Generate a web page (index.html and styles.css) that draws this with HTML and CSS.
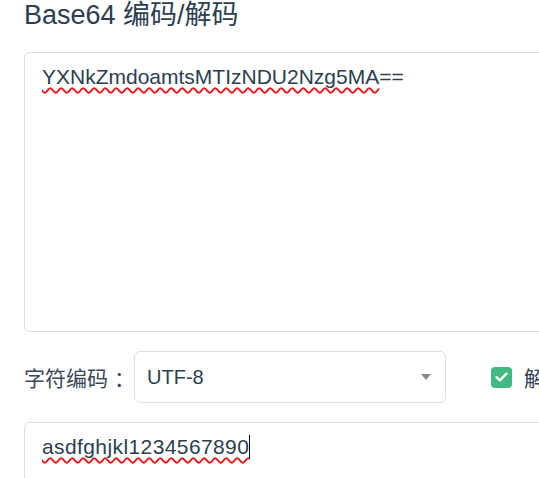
FILE: index.html
```html
<!DOCTYPE html>
<html lang="zh">
<head>
<meta charset="utf-8">
<link rel="stylesheet" href="styles.css">
</head>
<body>
<div class="page">
  <h1 class="title">Base64 编码/解码</h1>
  <div class="area area-top">
    <span class="spell">YXNkZmdoamtsMTIzNDU2Nzg5MA</span>==
  </div>
  <div class="row">
    <span class="label">字符编码<span class="colon">：</span></span>
    <div class="select">
      <span class="select-value">UTF-8</span>
      <span class="arrow"></span>
    </div>
    <label class="check">
      <span class="box">
        <svg width="13" height="10" viewBox="0 0 13 10"><path d="M1.5 5.2 L4.8 8.3 L11.5 1.7" fill="none" stroke="#fff" stroke-width="2.4" stroke-linecap="round" stroke-linejoin="round"/></svg>
      </span>
      <span class="check-text">解码</span>
    </label>
  </div>
  <div class="area area-bottom">
    <span class="spell spell-wide">asdfghjkl1234567890</span><span class="caret"></span>
  </div>
</div>
</body>
</html>
```
FILE: styles.css
```css
html, body {
  margin: 0;
  padding: 0;
  overflow: hidden;
  background: #fff;
}
body {
  font-family: "Liberation Sans", Arial, "Noto Sans CJK SC", sans-serif;
  color: #2c3e50;
}
.page {
  padding-left: 24px;
  width: 720px;
}
.title {
  margin: 0;
  font-size: 27px;
  font-weight: normal;
  line-height: 31px;
  color: #2c3e50;
}
.area {
  box-sizing: border-box;
  border: 1px solid #dcdfe6;
  border-radius: 6px;
  padding: 8px 17px;
  font-size: 21px;
  line-height: 32px;
  color: #2c3e50;
  white-space: nowrap;
}
.area-top {
  margin-top: 21px;
  height: 280px;
}
.spell {
  text-decoration: underline wavy #e8161b;
  text-decoration-thickness: 1.5px;
  text-underline-offset: 3px;
  text-decoration-skip-ink: none;
}
.spell-wide {
  letter-spacing: 0.4px;
}
.row {
  display: flex;
  align-items: center;
  margin-top: 19px;
  height: 52px;
}
.label {
  font-size: 21px;
  color: #3c4858;
  width: 110px;
  white-space: nowrap;
}
.colon {
  padding-left: 6px;
}
.select {
  box-sizing: border-box;
  width: 312px;
  height: 52px;
  border: 1px solid #dcdfe6;
  border-radius: 6px;
  display: flex;
  align-items: center;
  justify-content: space-between;
  padding: 0 14px 0 12px;
}
.select-value {
  font-size: 20px;
  color: #2c3e50;
}
.arrow {
  width: 0;
  height: 0;
  border-left: 5px solid transparent;
  border-right: 5px solid transparent;
  border-top: 6px solid #888;
}
.check {
  display: flex;
  align-items: center;
  margin-left: 45px;
}
.box {
  width: 21px;
  height: 21px;
  border-radius: 4px;
  background: #42b983;
  display: flex;
  align-items: center;
  justify-content: center;
}
.check-text {
  margin-left: 12px;
  font-size: 21px;
  color: #2c3e50;
}
.area-bottom {
  margin-top: 19px;
  height: 80px;
}
.caret {
  display: inline-block;
  width: 1px;
  height: 24px;
  background: #111;
  vertical-align: -5px;
}
```
